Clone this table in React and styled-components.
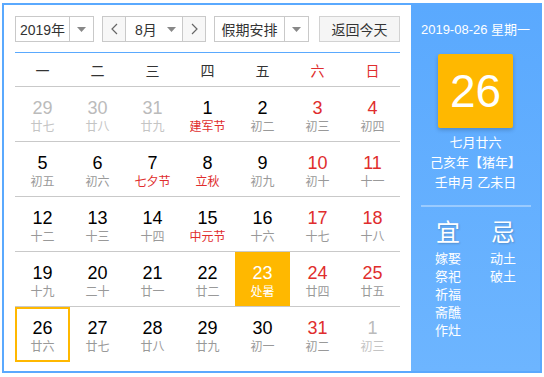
import React from 'react';
import styled, { createGlobalStyle } from 'styled-components';

const GlobalStyle = createGlobalStyle`
  body {
    margin: 0;
    font-family: 'Liberation Sans', 'Noto Sans CJK SC', sans-serif;
    background: #fff;
  }
`;

const weekDays = ['一', '二', '三', '四', '五', '六', '日'];

// d: day, l: lunar text, o: other month, f: festival, s: solar term (selected), t: today
const weeks = [
  [
    { d: 29, l: '廿七', o: true },
    { d: 30, l: '廿八', o: true },
    { d: 31, l: '廿九', o: true },
    { d: 1, l: '建军节', f: true },
    { d: 2, l: '初二' },
    { d: 3, l: '初三' },
    { d: 4, l: '初四' },
  ],
  [
    { d: 5, l: '初五' },
    { d: 6, l: '初六' },
    { d: 7, l: '七夕节', f: true },
    { d: 8, l: '立秋', f: true },
    { d: 9, l: '初九' },
    { d: 10, l: '初十' },
    { d: 11, l: '十一' },
  ],
  [
    { d: 12, l: '十二' },
    { d: 13, l: '十三' },
    { d: 14, l: '十四' },
    { d: 15, l: '中元节', f: true },
    { d: 16, l: '十六' },
    { d: 17, l: '十七' },
    { d: 18, l: '十八' },
  ],
  [
    { d: 19, l: '十九' },
    { d: 20, l: '二十' },
    { d: 21, l: '廿一' },
    { d: 22, l: '廿二' },
    { d: 23, l: '处暑', s: true },
    { d: 24, l: '廿四' },
    { d: 25, l: '廿五' },
  ],
  [
    { d: 26, l: '廿六', t: true },
    { d: 27, l: '廿七' },
    { d: 28, l: '廿八' },
    { d: 29, l: '廿九' },
    { d: 30, l: '初一' },
    { d: 31, l: '初二' },
    { d: 1, l: '初三', o: true },
  ],
];

const yi = ['嫁娶', '祭祀', '祈福', '斋醮', '作灶'];
const ji = ['动土', '破土'];

const Arrow = () => (
  <svg width="9" height="5" viewBox="0 0 9 5">
    <path d="M0 0 L9 0 L4.5 5 Z" fill="#888" />
  </svg>
);

const Chevron = ({ dir }) => (
  <svg width="7" height="12" viewBox="0 0 7 12">
    <path
      d={dir === 'left' ? 'M6 1 L1 6 L6 11' : 'M1 1 L6 6 L1 11'}
      fill="none"
      stroke="#666"
      strokeWidth="1.2"
    />
  </svg>
);

const App = () => {
  return (
    <>
      <GlobalStyle />
      <Wrapper>
        <Calendar>
          <Toolbar>
            <Select $width={79}>
              <SelectText>2019年</SelectText>
              <SelectArrow $divider>
                <Arrow />
              </SelectArrow>
            </Select>
            <MonthGroup>
              <NavButton>
                <Chevron dir="left" />
              </NavButton>
              <MonthSelect>
                <SelectText $pad={9}>8月</SelectText>
                <SelectArrow $w={21}>
                  <Arrow />
                </SelectArrow>
              </MonthSelect>
              <NavButton>
                <Chevron dir="right" />
              </NavButton>
            </MonthGroup>
            <Select $width={95}>
              <SelectText>假期安排</SelectText>
              <SelectArrow $divider>
                <Arrow />
              </SelectArrow>
            </Select>
            <TodayButton>返回今天</TodayButton>
          </Toolbar>
          <Header>
            {weekDays.map((w, i) => (
              <HeadCell key={w} $weekend={i > 4}>
                {w}
              </HeadCell>
            ))}
          </Header>
          <Grid>
            {weeks.map((week, r) => (
              <Row key={r} $last={r === weeks.length - 1}>
                {week.map((c, i) => (
                  <Cell
                    key={i}
                    $selected={c.s}
                    $today={c.t}
                  >
                    <DayNum $weekend={i > 4} $other={c.o} $selected={c.s}>
                      {c.d}
                    </DayNum>
                    <Lunar $festival={c.f} $other={c.o} $selected={c.s}>
                      {c.l}
                    </Lunar>
                  </Cell>
                ))}
              </Row>
            ))}
          </Grid>
        </Calendar>
        <Side>
          <SideDate>2019-08-26 星期一</SideDate>
          <BigDay>26</BigDay>
          <LunarInfo>
            <div>七月廿六</div>
            <div>己亥年【猪年】</div>
            <div>壬申月 乙未日</div>
          </LunarInfo>
          <Divider />
          <Almanac>
            <AlmanacCol>
              <AlmanacTitle>宜</AlmanacTitle>
              {yi.map((x) => (
                <AlmanacItem key={x}>{x}</AlmanacItem>
              ))}
            </AlmanacCol>
            <AlmanacCol>
              <AlmanacTitle>忌</AlmanacTitle>
              {ji.map((x) => (
                <AlmanacItem key={x}>{x}</AlmanacItem>
              ))}
            </AlmanacCol>
          </Almanac>
        </Side>
      </Wrapper>
    </>
  );
};

const Wrapper = styled.div`
  display: flex;
  width: 536px;
  height: 366px;
  margin: 3px 0 0 2px;
  border: 2px solid #5aa9fe;
  background: #fff;
`;

const Calendar = styled.div`
  display: flex;
  flex-direction: column;
  width: 385px;
  padding: 11px 11px 0 11px;
`;

const Toolbar = styled.div`
  display: flex;
  align-items: stretch;
  height: 26px;
  gap: 8px;
  color: #333;
  font-size: 14px;
`;

const Select = styled.div`
  display: flex;
  width: ${(p) => p.$width}px;
  box-sizing: border-box;
  border: 1px solid #c9c9c9;
  background: #fff;
`;

const SelectText = styled.div`
  flex: 1;
  display: flex;
  align-items: center;
  justify-content: ${(p) => (p.$pad ? 'flex-start' : 'center')};
  padding-left: ${(p) => p.$pad || 0}px;
  white-space: nowrap;
`;

const SelectArrow = styled.div`
  width: ${(p) => p.$w || 23}px;
  display: flex;
  align-items: center;
  justify-content: center;
  border-left: ${(p) => (p.$divider ? '1px solid #c9c9c9' : 'none')};
`;

const MonthGroup = styled.div`
  display: flex;
  width: 104px;
  box-sizing: border-box;
  border: 1px solid #c9c9c9;
`;

const NavButton = styled.div`
  width: 22px;
  display: flex;
  align-items: center;
  justify-content: center;
  background: #f7f7f7;
`;

const MonthSelect = styled.div`
  flex: 1;
  display: flex;
  border-left: 1px solid #c9c9c9;
  border-right: 1px solid #c9c9c9;
  background: #fff;
`;

const TodayButton = styled.div`
  margin-left: auto;
  width: 81px;
  box-sizing: border-box;
  display: flex;
  align-items: center;
  justify-content: center;
  border: 1px solid #d2d2d2;
  background: #f5f5f5;
`;

const Header = styled.div`
  display: grid;
  grid-template-columns: repeat(7, 1fr);
  margin-top: 10px;
  height: 33px;
  border-top: 1px solid #5aa9fe;
  border-bottom: 1px solid #c9c9c9;
`;

const HeadCell = styled.div`
  display: flex;
  align-items: center;
  justify-content: center;
  font-size: 14px;
  color: ${(p) => (p.$weekend ? '#e02d2d' : '#333')};
`;

const Grid = styled.div`
  display: flex;
  flex-direction: column;
`;

const Row = styled.div`
  display: grid;
  grid-template-columns: repeat(7, 1fr);
  height: 55px;
  box-sizing: border-box;
  border-bottom: ${(p) => (p.$last ? 'none' : '1px solid #c9c9c9')};
`;

const Cell = styled.div`
  display: flex;
  flex-direction: column;
  align-items: center;
  box-sizing: border-box;
  padding-top: ${(p) => (p.$today ? 9 : 11)}px;
  background: ${(p) => (p.$selected ? '#ffb800' : 'transparent')};
  border: ${(p) => (p.$today ? '2px solid #ffb800' : 'none')};
  height: ${(p) => (p.$today ? '55px' : 'auto')};
`;

const DayNum = styled.div`
  font-size: 18px;
  line-height: 20px;
  color: ${(p) =>
    p.$selected ? '#fff' : p.$other ? '#bbb' : p.$weekend ? '#e02d2d' : '#000'};
`;

const Lunar = styled.div`
  margin-top: 1px;
  font-size: 12px;
  line-height: 16px;
  color: ${(p) =>
    p.$selected ? '#fff' : p.$festival ? '#e02d2d' : p.$other ? '#c4c4c4' : '#999'};
`;

const Side = styled.div`
  flex: 1;
  display: flex;
  flex-direction: column;
  align-items: center;
  padding-top: 16px;
  background: linear-gradient(#5aa9fe, #6db5ff);
  color: #fff;
`;

const SideDate = styled.div`
  font-size: 13px;
  line-height: 18px;
  white-space: nowrap;
`;

const BigDay = styled.div`
  margin-top: 15px;
  width: 75px;
  height: 74px;
  display: flex;
  align-items: center;
  justify-content: center;
  background: #ffb800;
  border-radius: 2px;
  box-shadow: 0 2px 4px rgba(0, 0, 0, 0.2);
  font-size: 46px;
`;

const LunarInfo = styled.div`
  margin-top: 5px;
  font-size: 13px;
  line-height: 20px;
  text-align: center;
`;

const Divider = styled.div`
  margin-top: 12px;
  width: 110px;
  height: 2px;
  background: rgba(255, 255, 255, 0.35);
`;

const Almanac = styled.div`
  display: flex;
  gap: 27px;
  margin-top: 11px;
`;

const AlmanacCol = styled.div`
  display: flex;
  flex-direction: column;
  align-items: center;
  width: 28px;
`;

const AlmanacTitle = styled.div`
  font-size: 24px;
  line-height: 30px;
  margin-bottom: 2px;
  text-shadow: 1px 1px 2px rgba(0, 0, 0, 0.2);
`;

const AlmanacItem = styled.div`
  font-size: 13px;
  line-height: 18px;
  white-space: nowrap;
`;

export default App;
